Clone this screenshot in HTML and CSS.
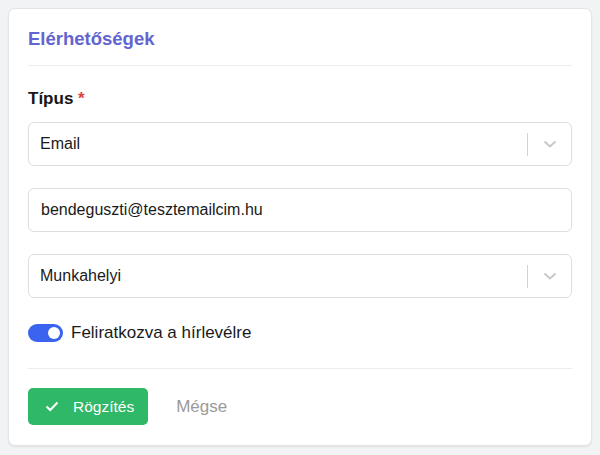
FILE: index.html
```html
<!DOCTYPE html>
<html lang="hu">
<head>
    <meta charset="UTF-8">
    <meta name="viewport" content="width=device-width, initial-scale=1.0">
    <title>Elérhetőségek</title>
    <link rel="stylesheet" href="styles.css">
</head>
<body>
	<div class="card">
		<h2 class="cardTitle">Elérhetőségek</h2>
		<label class="fieldLabel">Típus <span class="req">*</span></label>
		<div class="select">
			<span class="value">Email</span>
			<span class="sep"></span>
			<svg class="chev" width="14" height="8" viewBox="0 0 14 8"><path d="M1.5 1.5 L7 6.5 L12.5 1.5" fill="none" stroke="#c8c8c8" stroke-width="2"/></svg>
		</div>
		<div class="input">bendeguszti@tesztemailcim.hu</div>
		<div class="select">
			<span class="value">Munkahelyi</span>
			<span class="sep"></span>
			<svg class="chev" width="14" height="8" viewBox="0 0 14 8"><path d="M1.5 1.5 L7 6.5 L12.5 1.5" fill="none" stroke="#c8c8c8" stroke-width="2"/></svg>
		</div>
		<div class="toggleRow">
			<span class="toggle"><span class="knob"></span></span>
			<span>Feliratkozva a hírlevélre</span>
		</div>
		<div class="actions">
			<button class="btnSave">
				<svg width="14" height="11" viewBox="0 0 14 11"><path d="M1.5 5.5 L5.2 9 L12.5 1.5" fill="none" stroke="#fff" stroke-width="2"/></svg>
				Rögzítés
			</button>
			<button class="btnCancel">Mégse</button>
		</div>
	</div>
</body>
</html>
```

FILE: styles.css
```css
body,html{
    margin: 0;
    padding: 0;
}
body{
    background: #f2f3f5;
    padding: 8px;
    font-family: "Liberation Sans", Arial, sans-serif;
    color: #1f1f1f;
    height: 455px;
    box-sizing: border-box;
}
.card{
    background: #fff;
    border: 1px solid #e3e4e6;
    border-radius: 7px;
    box-shadow: 0 1px 2px rgba(0,0,0,0.08);
    padding: 0 19px 19px;
    height: 438px;
    box-sizing: border-box;
}
.cardTitle{
    margin: 0;
    font-size: 18.5px;
    font-weight: 700;
    color: #6265cf;
    padding: 21px 0 17px;
    line-height: 18px;
    border-bottom: 1px solid #ececec;
}
.fieldLabel{
    display: block;
    font-size: 17px;
    font-weight: 700;
    color: #161616;
    margin: 24px 0 14px;
    line-height: 18px;
}
.req{
    color: #d9453d;
}
.select, .input{
    display: flex;
    align-items: center;
    height: 44px;
    box-sizing: border-box;
    border: 1px solid #dedede;
    border-radius: 6px;
    padding: 0 14px 0 11px;
    font-size: 16px;
    color: #1a1a1a;
    margin-bottom: 22px;
}
.select .value{
    flex-grow: 1;
}
.sep{
    width: 1px;
    height: 23px;
    background: #d2d2d2;
    margin-right: 15px;
}
.chev{
    display: block;
}
.input{
    padding-left: 12px;
}
.toggleRow{
    display: flex;
    align-items: center;
    font-size: 17px;
    color: #1a1a1a;
    gap: 8px;
    margin-top: 25px;
    padding-bottom: 25px;
    border-bottom: 1px solid #ececec;
}
.toggle{
    width: 35px;
    height: 18px;
    border-radius: 9px;
    background: #3a64f0;
    position: relative;
}
.toggle .knob{
    position: absolute;
    top: 3px;
    right: 3px;
    width: 12px;
    height: 12px;
    border-radius: 50%;
    background: #fff;
}
.actions{
    display: flex;
    align-items: center;
    padding-top: 19px;
    gap: 8px;
}
.btnSave{
    display: flex;
    align-items: center;
    gap: 14px;
    height: 37px;
    padding: 0 14px 0 17px;
    background: #2eb867;
    border: none;
    border-radius: 5px;
    color: #fff;
    font-family: inherit;
    font-size: 15.5px;
}
.btnCancel{
    background: none;
    border: none;
    font-family: inherit;
    font-size: 17px;
    color: #9a9a9a;
    padding: 0 20px;
    height: 37px;
}
```
